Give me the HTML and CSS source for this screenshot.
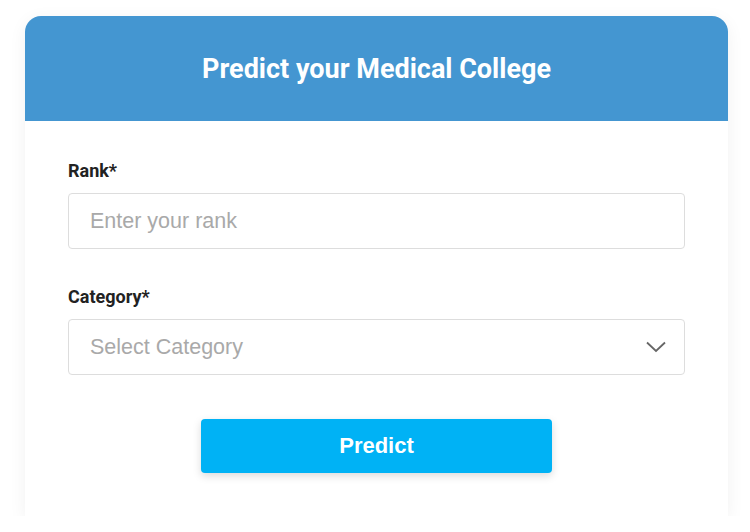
FILE: index.html
```html
<!DOCTYPE html>
<html lang="en">
<head>
  <meta charset="UTF-8">
  <meta name="viewport" content="width=device-width, initial-scale=1.0">
  <title>Predict your Medical College</title>
  <link rel="stylesheet" href="styles.css">
</head>
<body>
  <div class="card">
    <div class="card-header">
      <h1 class="title">Predict your Medical College</h1>
    </div>
    <form class="card-body">
      <div class="field">
        <label class="label" for="rank">Rank*</label>
        <input type="text" class="input" id="rank" placeholder="Enter your rank">
      </div>
      <div class="field">
        <label class="label" for="category">Category*</label>
        <div class="select-box">
          <select class="input select" id="category">
            <option value="">Select Category</option>
          </select>
          <svg class="chevron" width="20" height="12" viewBox="0 0 20 12">
            <path d="M1 1.5 L10 10 L19 1.5" fill="none" stroke="#666" stroke-width="1.8"/>
          </svg>
        </div>
      </div>
      <div class="actions">
        <button type="button" class="predict-btn">Predict</button>
      </div>
    </form>
  </div>
</body>
</html>
```

FILE: styles.css
```css
* {
  margin: 0;
  padding: 0;
  box-sizing: border-box;
}

body {
  background: #fff;
  font-family: Roboto, 'Liberation Sans', Arial, sans-serif;
  padding: 16px 22px 0 25px;
}

.card {
  background: #fff;
  border-radius: 16px 16px 0 0;
  box-shadow: 0 4px 18px rgba(0,0,0,0.06);
  height: 500px;
}

.card-header {
  background: #4496d1;
  border-radius: 16px 16px 0 0;
  height: 105px;
  display: flex;
  align-items: center;
  justify-content: center;
}

.title {
  color: #fff;
  font-size: 27px;
  font-weight: 700;
}

.card-body {
  padding: 39px 43px 0;
}

.field {
  margin-bottom: 37px;
}

.label {
  display: block;
  font-size: 18px;
  font-weight: 700;
  color: #222;
  margin-bottom: 11px;
  line-height: 22px;
}

.input {
  width: 100%;
  height: 56px;
  border: 1px solid #ddd;
  border-radius: 4px;
  padding: 0 21px;
  font-family: 'Liberation Sans', Arial, sans-serif;
  font-size: 21.5px;
  color: #333;
  background: #fff;
  outline: none;
}

.input::placeholder {
  color: #a9a9a9;
}

.select-box {
  position: relative;
}

.select {
  appearance: none;
  color: #a9a9a9;
}

.chevron {
  position: absolute;
  right: 19px;
  top: 22px;
  pointer-events: none;
}

.actions {
  display: flex;
  justify-content: center;
  padding-top: 7px;
}

.predict-btn {
  width: 351px;
  height: 54px;
  border: none;
  border-radius: 4px;
  background: #00b2f5;
  color: #fff;
  font-family: 'Liberation Sans', Arial, sans-serif;
  font-size: 22px;
  font-weight: 700;
  box-shadow: 0 3px 8px rgba(0,0,0,0.15);
  cursor: pointer;
}
```
